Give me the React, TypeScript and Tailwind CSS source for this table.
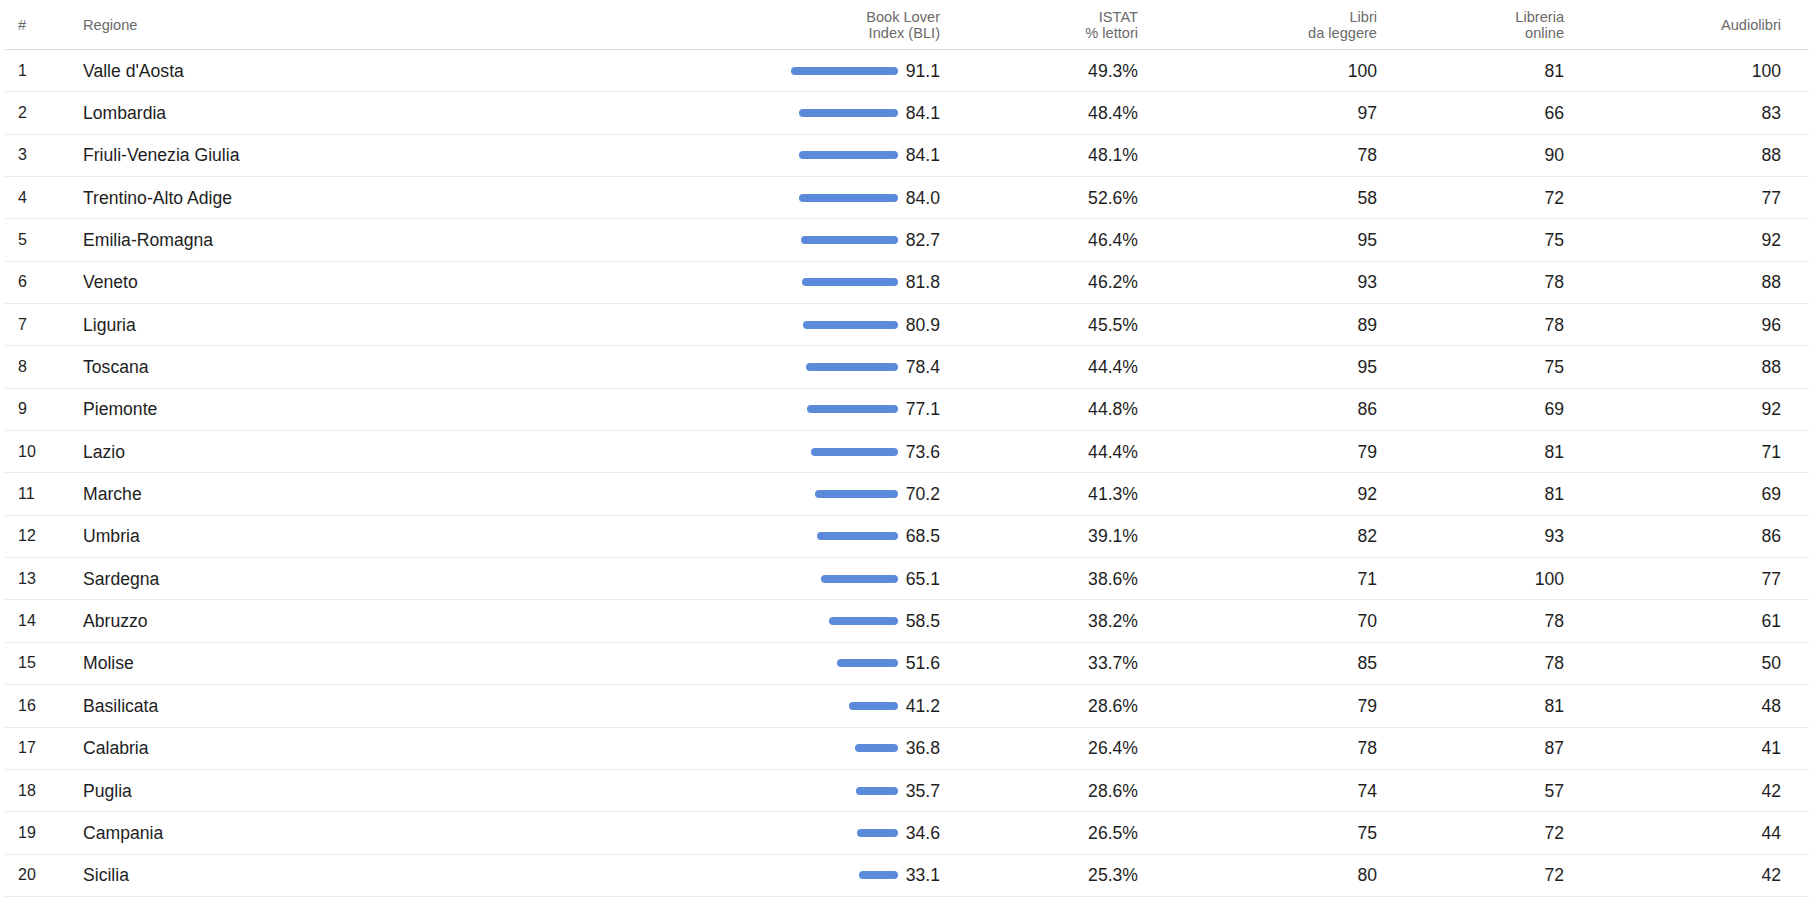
import React from 'react';

type Row = {
    region: string;
    bli: number;
    istat: string;
    libri: number;
    libreria: number;
    audio: number;
};

const rows: Row[] = [
    { region: "Valle d'Aosta", bli: 91.1, istat: '49.3%', libri: 100, libreria: 81, audio: 100 },
    { region: 'Lombardia', bli: 84.1, istat: '48.4%', libri: 97, libreria: 66, audio: 83 },
    { region: 'Friuli-Venezia Giulia', bli: 84.1, istat: '48.1%', libri: 78, libreria: 90, audio: 88 },
    { region: 'Trentino-Alto Adige', bli: 84.0, istat: '52.6%', libri: 58, libreria: 72, audio: 77 },
    { region: 'Emilia-Romagna', bli: 82.7, istat: '46.4%', libri: 95, libreria: 75, audio: 92 },
    { region: 'Veneto', bli: 81.8, istat: '46.2%', libri: 93, libreria: 78, audio: 88 },
    { region: 'Liguria', bli: 80.9, istat: '45.5%', libri: 89, libreria: 78, audio: 96 },
    { region: 'Toscana', bli: 78.4, istat: '44.4%', libri: 95, libreria: 75, audio: 88 },
    { region: 'Piemonte', bli: 77.1, istat: '44.8%', libri: 86, libreria: 69, audio: 92 },
    { region: 'Lazio', bli: 73.6, istat: '44.4%', libri: 79, libreria: 81, audio: 71 },
    { region: 'Marche', bli: 70.2, istat: '41.3%', libri: 92, libreria: 81, audio: 69 },
    { region: 'Umbria', bli: 68.5, istat: '39.1%', libri: 82, libreria: 93, audio: 86 },
    { region: 'Sardegna', bli: 65.1, istat: '38.6%', libri: 71, libreria: 100, audio: 77 },
    { region: 'Abruzzo', bli: 58.5, istat: '38.2%', libri: 70, libreria: 78, audio: 61 },
    { region: 'Molise', bli: 51.6, istat: '33.7%', libri: 85, libreria: 78, audio: 50 },
    { region: 'Basilicata', bli: 41.2, istat: '28.6%', libri: 79, libreria: 81, audio: 48 },
    { region: 'Calabria', bli: 36.8, istat: '26.4%', libri: 78, libreria: 87, audio: 41 },
    { region: 'Puglia', bli: 35.7, istat: '28.6%', libri: 74, libreria: 57, audio: 42 },
    { region: 'Campania', bli: 34.6, istat: '26.5%', libri: 75, libreria: 72, audio: 44 },
    { region: 'Sicilia', bli: 33.1, istat: '25.3%', libri: 80, libreria: 72, audio: 42 },
];

const cols = 'grid grid-cols-[65px_530px_353px_198px_239px_187px_217px]';

export default function App() {
    return (
        <div className="min-h-screen bg-white px-[5px] font-['Liberation_Sans',Arial,sans-serif] text-[#1e1e1e]">
            <div className={`${cols} h-[50px] items-center border-b border-[#dcdcdc] text-[14.6px] leading-[16px] text-[#6a6a6a]`}>
                <div className="px-[13px]">#</div>
                <div className="px-[13px]">Regione</div>
                <div className="px-[13px] text-right">
                    Book Lover
                    <br />
                    Index (BLI)
                </div>
                <div className="px-[13px] text-right">
                    ISTAT
                    <br />% lettori
                </div>
                <div className="px-[13px] text-right">
                    Libri
                    <br />
                    da leggere
                </div>
                <div className="px-[13px] text-right">
                    Libreria
                    <br />
                    online
                </div>
                <div className="px-[13px] text-right">Audiolibri</div>
            </div>
            {rows.map((r, i) => (
                <div
                    key={r.region}
                    className={`${cols} h-[42.35px] items-center border-b border-[#ebebeb] text-[17.6px] leading-[20px]`}
                >
                    <div className="px-[13px] text-[16px]">{i + 1}</div>
                    <div className="px-[13px]">{r.region}</div>
                    <div className="flex items-center justify-end gap-[8px] px-[13px]">
                        <div
                            className="h-[8px] rounded-full bg-[#5a8ad9]"
                            style={{ width: `${r.bli * 1.175}px` }}
                        />
                        <span>{r.bli.toFixed(1)}</span>
                    </div>
                    <div className="px-[13px] text-right">{r.istat}</div>
                    <div className="px-[13px] text-right">{r.libri}</div>
                    <div className="px-[13px] text-right">{r.libreria}</div>
                    <div className="px-[13px] text-right">{r.audio}</div>
                </div>
            ))}
        </div>
    );
}
